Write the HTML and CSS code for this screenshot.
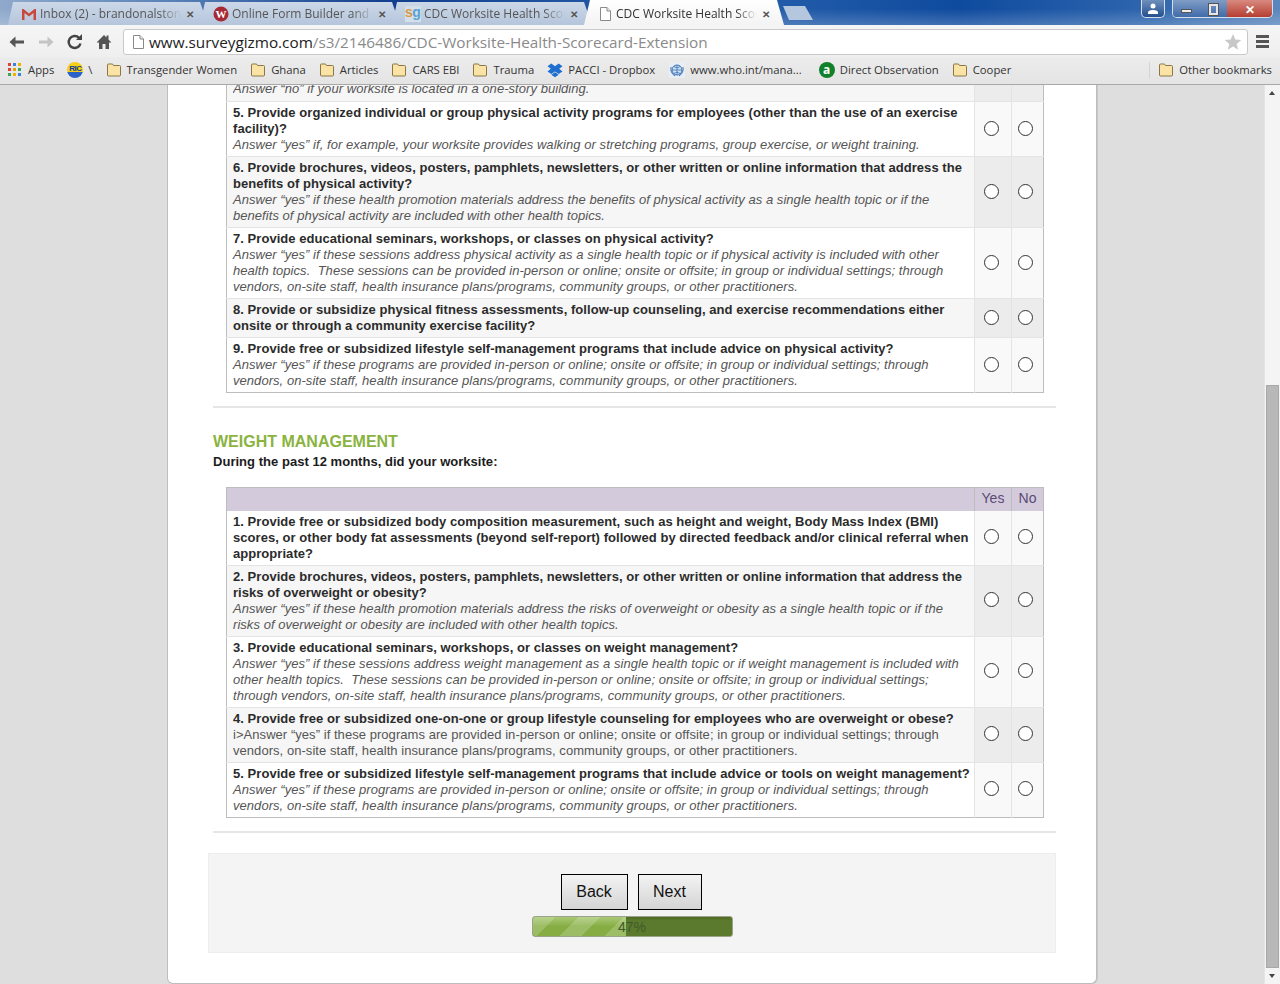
FILE: index.html
```html
<!DOCTYPE html>
<html lang="en">
<head>
  <meta charset="UTF-8" />
  <title>CDC Worksite Health Scorecard</title>
  <link rel="stylesheet" href="styles.css">
</head>
<body>
  <svg class="defs" width="0" height="0">
    <symbol id="folder" viewBox="0 0 16 16">
      <path d="M1.5 4V13a1 1 0 0 0 1 1h11a1 1 0 0 0 1-1V4.500a1 1 0 0 0-1-1H7.500L6.500 2H2.500a1 1 0 0 0-1 1z" fill="#fbe3a6" stroke="#8a7648"/>
    </symbol>
    <symbol id="doc" viewBox="0 0 16 16">
      <path d="M3.500 1.500H10L13.500 5V14.500H3.500z" fill="#fff" stroke="#8a8a8a"/>
      <path d="M10 1.500V5H13.500" fill="#eee" stroke="#8a8a8a"/>
    </symbol>
  </svg>

  <header class="browser">
    <div class="tabstrip">
      <div class="tab">
        <svg class="favicon" viewBox="0 0 16 16"><path d="M1 3V14H3.500V7L8 10.500 12.500 7V14H15V3H13.500L8 7.500 2.500 3z" fill="#c8493c"/></svg>
        <span class="tab-title">Inbox (2) - brandonalston.</span><span class="tab-x">✕</span>
      </div>
      <div class="tab">
        <svg class="favicon" viewBox="0 0 16 16"><circle cx="8" cy="8" r="7.500" fill="#a52a35"/><text x="8" y="11.500" class="wufoo-w">W</text></svg>
        <span class="tab-title">Online Form Builder and C</span><span class="tab-x">✕</span>
      </div>
      <div class="tab">
        <span class="sg-icon"><span class="sg-s">s</span><span class="sg-g">g</span></span>
        <span class="tab-title">CDC Worksite Health Scor</span><span class="tab-x">✕</span>
      </div>
      <div class="tab tab-active">
        <svg class="favicon"><use href="#doc"/></svg>
        <span class="tab-title">CDC Worksite Health Scor</span><span class="tab-x">✕</span>
      </div>
      <div class="tab-new"></div>
      <div class="window-btns">
        <div class="win-btn win-user">
          <svg width="14" height="14" viewBox="0 0 14 14"><circle cx="7" cy="4" r="2.500" fill="#fff"/><path d="M2 12V10.500Q2 8 7 8T12 10.500V12z" fill="#fff"/></svg>
        </div>
        <div class="win-group">
          <div class="win-btn win-min"><span class="min-bar"></span></div>
          <div class="win-btn win-max"><span class="max-box"></span></div>
          <div class="win-btn win-close">✕</div>
        </div>
      </div>
    </div>

    <div class="toolbar">
      <svg class="tool" viewBox="0 0 18 18"><path d="M16 7.500H7.500V3.500L1.500 9 7.500 14.500V10.500H16z" fill="#555"/></svg>
      <svg class="tool" viewBox="0 0 18 18"><path d="M2 7.500H10.500V3.500L16.500 9 10.500 14.500V10.500H2z" fill="#c4c4c4"/></svg>
      <svg class="tool" viewBox="0 0 18 18"><path d="M14.500 10.500A6 6 0 1 1 13 4.800" fill="none" stroke="#444" stroke-width="2.400"/><path d="M10 7H16V1z" fill="#444"/></svg>
      <svg class="tool" viewBox="0 0 18 18"><path d="M9 2 1.500 9.500H4V16H7.500V11H10.500V16H14V9.500H16.500L13.500 6.500V2.500H11.500V4.500z" fill="#555"/></svg>
      <div class="omnibox">
        <svg class="omni-doc"><use href="#doc"/></svg>
        <span class="url"><span class="url-host">www.surveygizmo.com</span>/s3/2146486/CDC-Worksite-Health-Scorecard-Extension</span>
        <svg class="star" viewBox="0 0 18 18"><path d="M9 1 11.300 6.600 17.300 7 12.700 10.900 14.200 16.800 9 13.600 3.800 16.800 5.300 10.900 .7 7 6.700 6.600z" fill="#c8c8c8"/></svg>
      </div>
      <div class="hamburger"><span></span><span></span><span></span></div>
    </div>

    <nav class="bookmarks">
      <div class="bm bm-apps">
        <span class="apps-grid"><i class="c1"></i><i class="c2"></i><i class="c3"></i><i class="c4"></i><i class="c5"></i><i class="c6"></i><i class="c7"></i><i class="c8"></i><i class="c9"></i></span>
        Apps
      </div>
      <div class="bm bm-ric"><span class="ric-icon">RIC</span><span class="ric-slash">\</span></div>
      <div class="bm"><svg class="bm-icon"><use href="#folder"/></svg>Transgender Women</div>
      <div class="bm"><svg class="bm-icon"><use href="#folder"/></svg>Ghana</div>
      <div class="bm"><svg class="bm-icon"><use href="#folder"/></svg>Articles</div>
      <div class="bm"><svg class="bm-icon"><use href="#folder"/></svg>CARS EBI</div>
      <div class="bm"><svg class="bm-icon"><use href="#folder"/></svg>Trauma</div>
      <div class="bm">
        <svg class="bm-icon" viewBox="0 0 16 16"><path d="M4.300 1.500 0.500 4.200 3.800 6.800 0.500 9.400 4.300 12 8 9.400 11.700 12 15.500 9.400 12.200 6.800 15.500 4.200 11.700 1.500 8 4.200z M4.300 12.800 8 15.200 11.700 12.800 8 10.300z" fill="#1f6fd0"/></svg>
        PACCI - Dropbox
      </div>
      <div class="bm bm-who">
        <svg class="bm-icon" viewBox="0 0 16 16"><rect width="16" height="16" fill="#e8eef6"/><circle cx="8" cy="8" r="5" fill="#cfe0f2" stroke="#3f74b5"/><path d="M3 8H13M8 3V13M4.500 4.500Q8 7 11.500 4.500M4.500 11.500Q8 9 11.500 11.500" stroke="#3f74b5" fill="none" stroke-width=".8"/><path d="M2 5Q1 11 6 14M14 5Q15 11 10 14" stroke="#3f74b5" fill="none"/></svg>
        www.who.int/mana...
      </div>
      <div class="bm bm-direct"><span class="a-icon">a</span>Direct Observation</div>
      <div class="bm"><svg class="bm-icon"><use href="#folder"/></svg>Cooper</div>
      <div class="bm bm-other"><svg class="bm-icon"><use href="#folder"/></svg>Other bookmarks</div>
    </nav>
  </header>

  <div class="viewport">
    <div class="page">
      <main class="card">
        <table class="grid">
          <tr class="alt clipped">
            <td class="q"><div class="clip-line"><em>Answer “no” if your worksite is located in a one-story building.</em></div></td>
            <td class="a"></td><td class="a a-no"></td>
          </tr>
          <tr>
            <td class="q"><strong>5. Provide organized individual or group physical activity programs for employees (other than the use of an exercise facility)?</strong><br><em>Answer “yes” if, for example, your worksite provides walking or stretching programs, group exercise, or weight training.</em></td>
            <td class="a"><input type="radio"></td><td class="a a-no"><input type="radio"></td>
          </tr>
          <tr class="alt">
            <td class="q"><strong>6. Provide brochures, videos, posters, pamphlets, newsletters, or other written or online information that address the benefits of physical activity?</strong><br><em>Answer “yes” if these health promotion materials address the benefits of physical activity as a single health topic or if the benefits of physical activity are included with other health topics.</em></td>
            <td class="a"><input type="radio"></td><td class="a a-no"><input type="radio"></td>
          </tr>
          <tr>
            <td class="q"><strong>7. Provide educational seminars, workshops, or classes on physical activity?</strong><br><em>Answer “yes” if these sessions address physical activity as a single health topic or if physical activity is included with other health topics.&nbsp; These sessions can be provided in-person or online; onsite or offsite; in group or individual settings; through vendors, on-site staff, health insurance plans/programs, community groups, or other practitioners.</em></td>
            <td class="a"><input type="radio"></td><td class="a a-no"><input type="radio"></td>
          </tr>
          <tr class="alt">
            <td class="q"><strong>8. Provide or subsidize physical fitness assessments, follow-up counseling, and exercise recommendations either onsite or through a community exercise facility?</strong></td>
            <td class="a"><input type="radio"></td><td class="a a-no"><input type="radio"></td>
          </tr>
          <tr>
            <td class="q"><strong>9. Provide free or subsidized lifestyle self-management programs that include advice on physical activity?</strong><br><em>Answer “yes” if these programs are provided in-person or online; onsite or offsite; in group or individual settings; through vendors, on-site staff, health insurance plans/programs, community groups, or other practitioners.</em></td>
            <td class="a"><input type="radio"></td><td class="a a-no"><input type="radio"></td>
          </tr>
        </table>

        <hr class="divider">

        <h2 class="section-title">WEIGHT MANAGEMENT</h2>
        <p class="section-sub">During the past 12 months, did your worksite:</p>

        <table class="grid">
          <tr class="head">
            <th class="q"></th><th class="a">Yes</th><th class="a a-no">No</th>
          </tr>
          <tr>
            <td class="q"><strong>1. Provide free or subsidized body composition measurement, such as height and weight, Body Mass Index (BMI) scores, or other body fat assessments (beyond self-report) followed by directed feedback and/or clinical referral when appropriate?</strong></td>
            <td class="a"><input type="radio"></td><td class="a a-no"><input type="radio"></td>
          </tr>
          <tr class="alt">
            <td class="q"><strong>2. Provide brochures, videos, posters, pamphlets, newsletters, or other written or online information that address the risks of overweight or obesity?</strong><br><em>Answer “yes” if these health promotion materials address the risks of overweight or obesity as a single health topic or if the risks of overweight or obesity are included with other health topics.</em></td>
            <td class="a"><input type="radio"></td><td class="a a-no"><input type="radio"></td>
          </tr>
          <tr>
            <td class="q"><strong>3. Provide educational seminars, workshops, or classes on weight management?</strong><br><em>Answer “yes” if these sessions address weight management as a single health topic or if weight management is included with other health topics.&nbsp; These sessions can be provided in-person or online; onsite or offsite; in group or individual settings; through vendors, on-site staff, health insurance plans/programs, community groups, or other practitioners.</em></td>
            <td class="a"><input type="radio"></td><td class="a a-no"><input type="radio"></td>
          </tr>
          <tr class="alt">
            <td class="q"><strong>4. Provide free or subsidized one-on-one or group lifestyle counseling for employees who are overweight or obese?</strong><br><span class="plain">i&gt;Answer “yes” if these programs are provided in-person or online; onsite or offsite; in group or individual settings; through vendors, on-site staff, health insurance plans/programs, community groups, or other practitioners.</span></td>
            <td class="a"><input type="radio"></td><td class="a a-no"><input type="radio"></td>
          </tr>
          <tr>
            <td class="q"><strong>5. Provide free or subsidized lifestyle self-management programs that include advice or tools on weight management?</strong><br><em>Answer “yes” if these programs are provided in-person or online; onsite or offsite; in group or individual settings; through vendors, on-site staff, health insurance plans/programs, community groups, or other practitioners.</em></td>
            <td class="a"><input type="radio"></td><td class="a a-no"><input type="radio"></td>
          </tr>
        </table>

        <hr class="divider">

        <div class="actions">
          <div class="buttons">
            <button class="btn btn-back" type="button">Back</button>
            <button class="btn btn-next" type="button">Next</button>
          </div>
          <div class="progress">
            <div class="progress-fill" style="width: 47%"></div>
            <span class="progress-label">47%</span>
          </div>
        </div>
      </main>
    </div>

    <div class="scrollbar">
      <span class="arrow-up"></span>
      <div class="thumb"></div>
      <span class="arrow-down"></span>
    </div>
  </div>
</body>
</html>
```

FILE: styles.css
```css
* {
  box-sizing: border-box;
}
html, body {
  margin: 0;
  padding: 0;
  height: 984px;
  overflow: hidden;
}
body {
  display: flex;
  flex-direction: column;
  font-family: "Liberation Sans", Arial, sans-serif;
  background-color: #dedede;
}
.defs {
  position: absolute;
}

/* browser chrome */
.browser {
  height: 85px;
  flex: none;
  font-family: "Open Sans", "Noto Sans", sans-serif;
}
.tabstrip {
  height: 25px;
  display: flex;
  padding-left: 8px;
  background:
    linear-gradient(rgba(255,255,255,0) 35%, rgba(255,255,255,.2)),
    linear-gradient(90deg, #8fa9cb 0, #5f86ba 12%, #123f8e 30%, #2a62ad 55%, #0e4a9e 75%, #2f66ae 90%, #5b86bd 100%);
}
.tab {
  width: 200px;
  height: 23px;
  margin: 2px -8px 0 0;
  padding: 0 14px 0 13px;
  display: flex;
  align-items: center;
  gap: 3px;
  font-size: 12px;
  color: #555;
  background: linear-gradient(#ccd8e8, #b5c5db);
  clip-path: polygon(5px 0, 192px 0, 100% 100%, 0 100%);
}
.tab-active {
  height: 25px;
  margin-top: 0;
  padding-top: 2px;
  color: #333;
  background: linear-gradient(#fff, #f3f3f3);
  clip-path: polygon(6px 0, 193px 0, 100% 100%, 0 100%);
}
.favicon {
  width: 16px;
  height: 16px;
  flex: none;
}
.wufoo-w {
  font-family: "Liberation Serif", serif;
  font-size: 11px;
  font-weight: bold;
  fill: #fff;
  text-anchor: middle;
}
.sg-icon {
  width: 16px;
  height: 16px;
  flex: none;
  overflow: hidden;
  font-family: "Liberation Sans", sans-serif;
  font-size: 14px;
  font-weight: bold;
  line-height: 13px;
  letter-spacing: -.5px;
  background-color: #d5dfe9;
}
.sg-s {
  color: #d99a45;
}
.sg-g {
  color: #56a3d3;
}
.tab-title {
  flex: 1;
  white-space: nowrap;
  overflow: hidden;
  -webkit-mask-image: linear-gradient(90deg, #000 85%, transparent);
  mask-image: linear-gradient(90deg, #000 85%, transparent);
}
.tab-x {
  margin-left: 2px;
  font-size: 10px;
  font-weight: bold;
  color: #555;
  flex: none;
}
.tab-new {
  width: 30px;
  height: 14px;
  margin: 6px 0 0 7px;
  background-color: #b5c7de;
  clip-path: polygon(0 0, 22px 0, 100% 100%, 6px 100%);
}
.window-btns {
  margin-left: auto;
  display: flex;
  gap: 7px;
  padding-right: 7px;
  height: 18px;
}
.win-btn {
  height: 18px;
  display: flex;
  align-items: center;
  justify-content: center;
}
.win-user {
  width: 24px;
  border: 1px solid #d5deea;
  border-top: none;
  border-radius: 0 0 5px 5px;
  background: linear-gradient(#6f8fbb, #23508f);
}
.win-group {
  display: flex;
  border: 1px solid #d5deea;
  border-top: none;
  border-radius: 0 0 5px 5px;
  overflow: hidden;
}
.win-min {
  width: 27px;
  background: linear-gradient(#7f9cc5, #3c69a8);
}
.min-bar {
  width: 11px;
  height: 4px;
  margin-top: 4px;
  background-color: #eee;
  border: 1px solid #555;
}
.win-max {
  width: 27px;
  background: linear-gradient(#7f9cc5, #3c69a8);
}
.max-box {
  width: 9px;
  height: 11px;
  border: 2px solid #e6e6e6;
  outline: 1px solid #555;
}
.win-close {
  width: 45px;
  color: #fff;
  font-size: 12px;
  font-weight: bold;
  background: linear-gradient(#d98a80, #b3392c);
}
.toolbar {
  height: 32px;
  display: flex;
  align-items: center;
  padding: 1px 8px 0 8px;
  background: linear-gradient(#f5f5f5, #efefef);
}
.tool {
  width: 18px;
  height: 18px;
  margin-right: 11px;
  flex: none;
}
.tool:nth-child(4) {
  margin-right: 10px;
}
.omnibox {
  width: 1125px;
  height: 26px;
  padding: 0 5px 0 6px;
  display: flex;
  align-items: center;
  background-color: #fff;
  border: 1px solid #c9c9c9;
  border-radius: 3px;
}
.omni-doc {
  width: 16px;
  height: 16px;
  flex: none;
  margin-right: 3px;
}
.url {
  font-size: 15.3px;
  color: #8a8a8a;
  white-space: nowrap;
  flex: 1;
}
.url-host {
  color: #222;
}
.star {
  width: 18px;
  height: 18px;
}
.hamburger {
  margin-left: 8px;
  width: 13px;
  display: flex;
  flex-direction: column;
  gap: 2px;
}
.hamburger span {
  height: 3px;
  background-color: #555;
}
.bookmarks {
  height: 28px;
  display: flex;
  align-items: center;
  gap: 13px;
  padding: 0 8px 2px 8px;
  font-size: 11.3px;
  color: #333;
  background: linear-gradient(#ececec, #e4e4e4);
  border-bottom: 1px solid #a8a8a8;
  white-space: nowrap;
}
.bm {
  display: flex;
  align-items: center;
  gap: 5px;
}
.bm-icon {
  width: 16px;
  height: 16px;
  flex: none;
}
.bm-apps {
  gap: 7px;
}
.apps-grid {
  width: 13px;
  height: 13px;
  display: grid;
  grid-template-columns: repeat(3, 3px);
  gap: 2px;
}
.apps-grid i {
  display: block;
  height: 3px;
}
.c1, .c4 { background-color: #d9453a; }
.c2, .c9 { background-color: #3f7fe0; }
.c3, .c8 { background-color: #f0b400; }
.c5 { background-color: #e8a000; }
.c6, .c7 { background-color: #3aa655; }
.ric-icon {
  width: 16px;
  height: 16px;
  border-radius: 50%;
  background: linear-gradient(#f6cf1a 65%, #2a62c8 65%);
  font-family: "Liberation Sans", sans-serif;
  font-size: 8px;
  font-weight: bold;
  line-height: 13px;
  text-align: center;
  letter-spacing: -.5px;
  color: #123a90;
}
.bm-who {
  margin-left: 1px;
}
.bm-direct {
  margin-left: 4px;
}
.a-icon {
  width: 16px;
  height: 16px;
  border-radius: 50%;
  background-color: #11802a;
  color: #fff;
  font-size: 12px;
  font-weight: bold;
  line-height: 15px;
  text-align: center;
}
.bm-other {
  margin-left: auto;
  padding-left: 8px;
  border-left: 1px solid #d4d4d4;
}

/* page */
.viewport {
  flex: 1;
  min-height: 0;
  display: flex;
}
.page {
  flex: 1;
  overflow: hidden;
  background-color: #dedede;
}
.card {
  width: 930px;
  height: 899px;
  margin-left: 167px;
  padding: 0 40px 0 45px;
  background-color: #fff;
  border: 1px solid #bdbdbd;
  border-top: none;
  border-radius: 0 0 6px 6px;
  box-shadow: 1px 0 0 #c8c8c8;
}
.grid {
  width: 818px;
  margin-left: 13px;
  border-collapse: collapse;
  table-layout: fixed;
  font-size: 13px;
  line-height: 16px;
  letter-spacing: .05px;
  border: 1px solid #bdbdbd;
  border-top: none;
}
.grid td, .grid th {
  padding: 3px 3px 3px 6px;
  border-bottom: 1px solid #e4e4e4;
}
.grid tr:last-child td {
  border-bottom: none;
}
.grid .q {
  width: 748px;
  background-color: #fff;
}
.grid td.a {
  padding: 0 3px 2px 0;
}
.grid td.a-no {
  padding-right: 4px;
}
.grid .a {
  width: 37px;
  text-align: center;
  vertical-align: middle;
  line-height: 0;
  background-color: #f9f9f9;
  border-left: 1px solid #e4e4e4;
}
.grid .a-no {
  width: 32px;
}
.alt .q {
  background-color: #f6f6f6 !important;
}
.alt .a {
  background-color: #ececec !important;
}
.grid strong {
  color: #2b2b2b;
}
.grid em {
  color: #555;
}
.plain {
  color: #555;
}
.clipped td {
  height: 16px;
  padding: 0 6px;
}
.clip-line {
  height: 12px;
  line-height: 16px;
  overflow: hidden;
  margin-bottom: 4px;
  display: flex;
  align-items: flex-end;
}
.head th {
  height: 23px;
  padding: 0 0 3px 0;
  background-color: #d3cbdc !important;
  border: 1px solid #bdbdbd;
  border-bottom: none;
  font-weight: normal;
  color: #5b4a74;
  font-size: 14px;
  line-height: 16px;
}
.grid input[type="radio"] {
  appearance: none;
  display: inline-block;
  width: 15px;
  height: 15px;
  margin: 0;
  background-color: #fff;
  border: 1.5px solid #333;
  border-radius: 50%;
}
.divider {
  height: 2px;
  margin: 13px 0 0 0;
  background-color: #e6e6e6;
  border: none;
}
.section-title {
  margin: 24px 0 0 0;
  font-size: 16px;
  line-height: 19px;
  color: #8ab340;
}
.section-sub {
  margin: 3px 0 17px 0;
  font-size: 13px;
  letter-spacing: .03px;
  line-height: 16px;
  font-weight: bold;
  color: #1c1c1c;
}
.actions {
  width: 848px;
  height: 100px;
  margin: 20px 0 0 -5px;
  padding-top: 20px;
  display: flex;
  flex-direction: column;
  align-items: center;
  background-color: #f4f4f4;
  border: 1px solid #ededed;
}
.buttons {
  display: flex;
  gap: 10px;
  margin-left: -2px;
}
.btn {
  height: 36px;
  font-family: "Liberation Sans", Arial, sans-serif;
  font-size: 16px;
  color: #111;
  background: linear-gradient(#f3f3f3, #d4d4d4);
  border: 1px solid #000;
  padding: 0;
}
.btn-back {
  width: 67px;
}
.btn-next {
  width: 64px;
}
.progress {
  position: relative;
  width: 201px;
  height: 21px;
  margin: 6px 0 0 0;
  background: linear-gradient(#4f6a22, #5c7a2d 20%);
  border: 1px solid #9aa38c;
  border-radius: 3px;
  overflow: hidden;
}
.progress-fill {
  height: 100%;
  background:
    repeating-linear-gradient(135deg, rgba(255,255,255,.18) 0 16px, rgba(255,255,255,0) 16px 32px),
    linear-gradient(#a9c974, #86ad44 50%);
}
.progress-label {
  position: absolute;
  top: 1px;
  left: 0;
  right: 0;
  text-align: center;
  font-size: 14px;
  line-height: 18px;
  color: #3f5a2a;
}

/* scrollbar */
.scrollbar {
  width: 16px;
  flex: none;
  position: relative;
  background-color: #f4f4f4;
  border-left: 1px solid #e4e4e4;
}
.thumb {
  position: absolute;
  top: 300px;
  bottom: 16px;
  left: 1px;
  right: 1px;
  background-color: #b8b8b8;
  border: 1px solid #a8a8a8;
}
.arrow-up, .arrow-down {
  position: absolute;
  left: 4px;
  width: 0;
  height: 0;
  border-left: 3.500px solid transparent;
  border-right: 3.500px solid transparent;
}
.arrow-up {
  top: 6px;
  border-bottom: 4px solid #444;
}
.arrow-down {
  bottom: 6px;
  border-top: 4px solid #444;
}
```
